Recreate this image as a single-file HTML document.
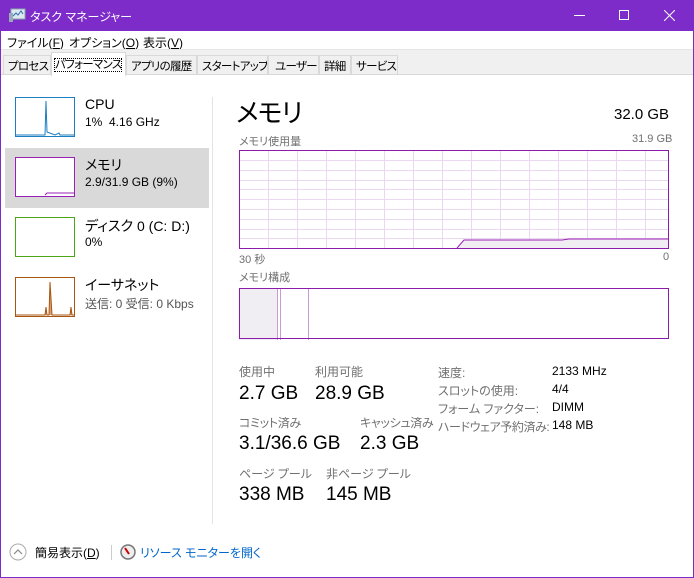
<!DOCTYPE html><html><head><meta charset="utf-8"><style>
*{margin:0;padding:0;box-sizing:border-box}
body{width:694px;height:578px;overflow:hidden;background:#fff;font-family:"Liberation Sans","Noto Sans CJK JP",sans-serif;font-feature-settings:"palt";position:relative;color:#000}
.a{position:absolute;white-space:nowrap}
.g{color:#707070;font-size:11px}
.s{font-size:12px}
.v{font-size:19px}
.t{overflow:hidden;font-size:11.5px;letter-spacing:-.7px}
</style></head><body>
<div class="a" style="left:0;top:0;width:694px;height:578px;border:1px solid #7d2bc9"></div>
<div class="a" style="left:0;top:0;width:694px;height:31px;background:#7d2bc9"></div>
<svg class="a" style="left:9px;top:8px" width="18" height="15"><rect x="2" y="1" width="14" height="10" fill="#dfe8f0" stroke="#8aa" /><polyline points="4,8 7,5 9,7 12,3 14,6" fill="none" stroke="#2a6fb0"/><rect x="0" y="5" width="4" height="9" fill="#9ab"/></svg>
<div class="a" style="left:30px;top:8px;color:#fff;font-size:12px">タスク マネージャー</div>
<div class="a" style="left:574px;top:15px;width:11px;height:1px;background:#fff"></div>
<div class="a" style="left:619px;top:10px;width:10px;height:10px;border:1px solid #fff"></div>
<svg class="a" style="left:664px;top:10px" width="11" height="11"><path d="M0 0L11 11M11 0L0 11" stroke="#fff" stroke-width="1"/></svg>
<div class="a s" style="left:7px;top:34px">ファイル(<u>F</u>)</div>
<div class="a s" style="left:69px;top:34px">オプション(<u>O</u>)</div>
<div class="a s" style="left:143px;top:34px">表示(<u>V</u>)</div>
<div class="a" style="left:1px;top:49px;width:692px;height:26px;background:#f0f0f0;border-bottom:1px solid #d9d9d9;border-top:1px solid #e6e6e6"></div>
<div class="a t" style="left:3px;top:55px;height:20px;width:48px;border:1px solid #d9d9d9;background:#f0f0f0;padding:2px 0 0 4px">プロセス</div>
<div class="a t" style="left:51px;top:52px;height:24px;width:75px;border:1px solid #d9d9d9;border-bottom:none;background:#fff;padding:3px 0 0 3px"><span style="outline:1px dotted #000">パフォーマンス</span></div>
<div class="a t" style="left:126px;top:55px;height:20px;width:71px;border:1px solid #d9d9d9;background:#f0f0f0;padding:2px 0 0 4px">アプリの履歴</div>
<div class="a t" style="left:197px;top:55px;height:20px;width:71px;border:1px solid #d9d9d9;background:#f0f0f0;padding:2px 0 0 4px">スタートアップ</div>
<div class="a t" style="left:268px;top:55px;height:20px;width:51px;border:1px solid #d9d9d9;background:#f0f0f0;padding:2px 0 0 6px">ユーザー</div>
<div class="a t" style="left:319px;top:55px;height:20px;width:32px;border:1px solid #d9d9d9;background:#f0f0f0;padding:2px 0 0 4px">詳細</div>
<div class="a t" style="left:351px;top:55px;height:20px;width:47px;border:1px solid #d9d9d9;background:#f0f0f0;padding:2px 0 0 4px">サービス</div>
<div class="a" style="left:212px;top:97px;width:1px;height:427px;background:#e3e3e3"></div>
<div class="a" style="left:5px;top:148px;width:204px;height:60px;background:#d9d9d9"></div>
<svg class="a" style="left:15px;top:97px" width="60" height="41"><rect x="0.5" y="0.5" width="59" height="39" fill="#fff" stroke="#1b7ec0"/><polyline points="1,38 30,38 31,4 32,35 40,38 44,36 45,38 59,38" fill="none" stroke="#1b7ec0"/></svg>
<div class="a" style="left:85px;top:96px;font-size:14px">CPU</div>
<div class="a s" style="left:85px;top:115px">1%&nbsp; 4.16 GHz</div>
<svg class="a" style="left:15px;top:157px" width="60" height="41"><rect x="0.5" y="0.5" width="59" height="39" fill="#fff" stroke="#9a1fb5"/><polyline points="30,38 32,36 59,36" fill="none" stroke="#9a1fb5"/></svg>
<div class="a" style="left:85px;top:155px;font-size:14px">メモリ</div>
<div class="a s" style="left:85px;top:175px">2.9/31.9 GB (9%)</div>
<svg class="a" style="left:15px;top:217px" width="60" height="41"><rect x="0.5" y="0.5" width="59" height="39" fill="#fff" stroke="#4ca716"/></svg>
<div class="a" style="left:85px;top:216px;font-size:14px">ディスク 0 (C: D:)</div>
<div class="a s" style="left:85px;top:235px">0%</div>
<svg class="a" style="left:15px;top:277px" width="60" height="41"><rect x="0.5" y="0.5" width="59" height="39" fill="#fff" stroke="#a7550f"/><polyline points="1,38 30,38 31,30 32,38 34,38 35,5 37,38 55,38 56,30 57,38 59,38" fill="#d9a07a" stroke="#a7550f"/></svg>
<div class="a" style="left:85px;top:275px;font-size:14px">イーサネット</div>
<div class="a s" style="left:85px;top:295px;color:#555">送信: 0 受信: 0 Kbps</div>
<div class="a" style="left:236px;top:93px;font-size:26px;letter-spacing:-1px">メモリ</div>
<div class="a" style="left:614px;top:106px;font-size:15px">32.0 GB</div>
<div class="a g" style="left:239px;top:133px">メモリ使用量</div>
<div class="a g" style="left:632px;top:133px">31.9 GB</div>
<svg class="a" style="left:239px;top:150px" width="430" height="99">
<g stroke="#ead7f0" stroke-width="1">
<path d="M29.5 0V99M58.5 0V99M87.5 0V99M116.5 0V99M145.5 0V99M174.5 0V99M203.5 0V99M232.5 0V99M261.5 0V99M290.5 0V99M319.5 0V99M348.5 0V99M377.5 0V99M406.5 0V99"/>
<path d="M0 10.5H430M0 20.5H430M0 30.5H430M0 39.5H430M0 49.5H430M0 59.5H430M0 69.5H430M0 79.5H430M0 88.5H430"/>
</g>
<polygon points="218,98 225,90 323,90 330,89 430,89 430,98" fill="#f1eef3"/>
<polyline points="218,98 225,90 323,90 330,89 430,89" fill="none" stroke="#9a1fb5"/>
<rect x="0.5" y="0.5" width="429" height="98" fill="none" stroke="#8c1aaa"/>
</svg>
<div class="a g" style="left:239px;top:251px">30 秒</div>
<div class="a g" style="left:663px;top:251px">0</div>
<div class="a g" style="left:239px;top:269px">メモリ構成</div>
<svg class="a" style="left:239px;top:288px" width="430" height="52">
<rect x="0" y="0" width="38" height="52" fill="#f1eef3"/>
<path d="M38.5 0V52M41.5 0V52M69.5 0V52" stroke="#c99ad6"/>
<rect x="0.5" y="0.5" width="429" height="50" fill="none" stroke="#8c1aaa"/>
</svg>
<div class="a g" style="left:239px;top:363px;font-size:12px">使用中</div>
<div class="a g" style="left:315px;top:363px;font-size:12px">利用可能</div>
<div class="a v" style="left:239px;top:383px">2.7 GB</div>
<div class="a v" style="left:315px;top:383px">28.9 GB</div>
<div class="a g" style="left:239px;top:414px;font-size:12px;letter-spacing:-.3px">コミット済み</div>
<div class="a g" style="left:360px;top:414px;font-size:12px;letter-spacing:-.3px">キャッシュ済み</div>
<div class="a v" style="left:239px;top:433px">3.1/36.6 GB</div>
<div class="a v" style="left:360px;top:433px">2.3 GB</div>
<div class="a g" style="left:239px;top:465px;font-size:12px">ページ プール</div>
<div class="a g" style="left:326px;top:465px;font-size:12px">非ページ プール</div>
<div class="a v" style="left:239px;top:484px">338 MB</div>
<div class="a v" style="left:326px;top:484px">145 MB</div>
<div class="a g" style="left:438px;top:364px;font-size:12px">速度:</div>
<div class="a g" style="left:438px;top:382px;font-size:12px">スロットの使用:</div>
<div class="a g" style="left:438px;top:400px;font-size:12px">フォーム ファクター:</div>
<div class="a g" style="left:438px;top:418px;font-size:12px;letter-spacing:-.4px">ハードウェア予約済み:</div>
<div class="a" style="left:552px;top:364px;font-size:12px">2133 MHz</div>
<div class="a" style="left:552px;top:382px;font-size:12px">4/4</div>
<div class="a" style="left:552px;top:400px;font-size:12px">DIMM</div>
<div class="a" style="left:552px;top:418px;font-size:12px">148 MB</div>
<svg class="a" style="left:9px;top:543px" width="18" height="18"><circle cx="9" cy="9" r="8" fill="#fff" stroke="#aaa"/><path d="M5 11L9 7L13 11" fill="none" stroke="#888" stroke-width="1.2"/></svg>
<div class="a s" style="left:35px;top:544px">簡易表示(<u>D</u>)</div>
<div class="a" style="left:111px;top:545px;width:1px;height:15px;background:#ccc"></div>
<svg class="a" style="left:120px;top:544px" width="16" height="16"><circle cx="8" cy="8" r="7" fill="#eee" stroke="#777" stroke-width="1.5"/><path d="M5 4L9 10" stroke="#c00" stroke-width="2"/></svg>
<div class="a s" style="left:140px;top:544px;color:#0066cc">リソース モニターを開く</div>
</body></html>
